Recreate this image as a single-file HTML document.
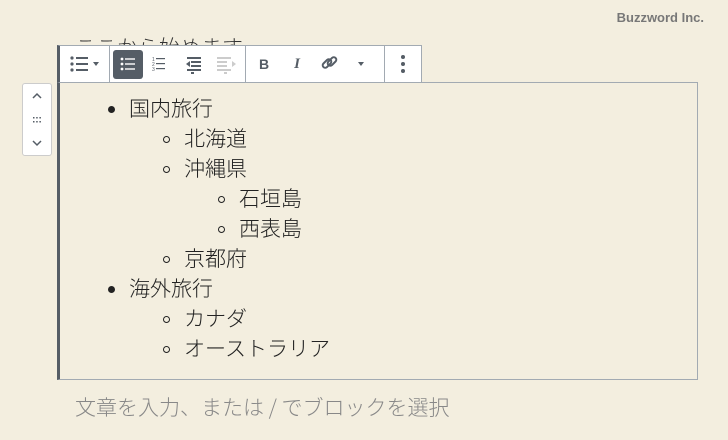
<!DOCTYPE html>
<html><head><meta charset="utf-8"><style>
*{margin:0;padding:0;box-sizing:border-box}
body{width:728px;height:440px;background:#f3eedf;position:relative;overflow:hidden;font-family:"Liberation Sans","Noto Sans CJK JP",sans-serif;color:#222}
.abs{position:absolute}
.logo{right:24px;top:10px;font:bold 13px "Liberation Sans",sans-serif;color:#777}
.behind{left:75px;top:32px;font-size:21px;color:#333;white-space:nowrap;font-family:"Noto Sans CJK JP",sans-serif;font-weight:300}
.tb{left:57px;top:45px;width:365px;height:38px;background:#fff;border:1px solid #a2aab2;border-left:3px solid #555d66;display:flex}
.g{border-right:1px solid #a2aab2;display:flex;align-items:center;height:100%}
.block{left:57px;top:82px;width:641px;height:298px;border:1px solid #a2aab2;border-left:3px solid #555d66}
.mover{left:22px;top:83px;width:30px;height:73px;background:#fff;border:1px solid #ccc;border-radius:3px}
.li{position:absolute;font-size:21px;line-height:30px;white-space:nowrap;font-family:"Noto Sans CJK JP",sans-serif;font-weight:300}
.d1::before,.d2::before{content:"";position:absolute;top:13px;width:7px;height:7px;border-radius:50%}
.d1::before{left:-21px;background:#222}
.d2::before{left:-21px;border:1.3px solid #222;width:7px;height:7px;box-sizing:border-box}
.ph{left:75px;top:392px;font-size:21px;color:#888;white-space:nowrap;font-family:"Noto Sans CJK JP",sans-serif;font-weight:300}
</style></head><body>
<div class="abs logo">Buzzword Inc.</div>
<div class="abs behind">ここから始めます</div>
<div class="abs block"></div>
<div class="abs tb">
 <div class="g" style="width:50px;justify-content:center">
  <svg width="34" height="20"><g fill="#555d66"><circle cx="4" cy="4" r="1.6"/><circle cx="4" cy="10" r="1.6"/><circle cx="4" cy="16" r="1.6"/><rect x="8" y="3" width="12" height="2"/><rect x="8" y="9" width="12" height="2"/><rect x="8" y="15" width="12" height="2"/><path d="M25 8h6l-3 4z"/></g></svg>
 </div>
 <div class="g" style="width:136px;padding-left:3px;gap:0">
  <div style="width:30px;height:29px;background:#555d66;border-radius:3px;display:flex;align-items:center;justify-content:center">
   <svg width="16" height="14"><g fill="#fff"><circle cx="2" cy="2" r="1.4"/><circle cx="2" cy="7" r="1.4"/><circle cx="2" cy="12" r="1.4"/><rect x="5" y="1.3" width="10" height="1.4"/><rect x="5" y="6.3" width="10" height="1.4"/><rect x="5" y="11.3" width="10" height="1.4"/></g></svg>
  </div>
  <svg width="34" height="20"><g fill="#555d66" font-size="5" font-family="Liberation Sans"><text x="9" y="7">1</text><text x="9" y="12">2</text><text x="9" y="17">3</text><rect x="13" y="4" width="9" height="1.2"/><rect x="13" y="9" width="9" height="1.2"/><rect x="13" y="14" width="9" height="1.2"/></g></svg>
  <svg width="34" height="20"><g fill="#555d66"><rect x="10" y="3" width="14" height="2"/><rect x="14" y="7" width="10" height="2"/><rect x="14" y="11" width="10" height="2"/><rect x="10" y="15" width="14" height="2"/><path d="M9 10l4-3v6z"/><rect x="14" y="18" width="3" height="2"/></g></svg>
  <svg width="34" height="20"><g fill="#ccc"><rect x="6" y="3" width="14" height="2"/><rect x="6" y="7" width="10" height="2"/><rect x="6" y="11" width="10" height="2"/><rect x="6" y="15" width="14" height="2"/><path d="M25 10l-4-3v6z"/><rect x="13" y="18" width="3" height="2"/></g></svg>
 </div>
 <div class="g" style="width:139px;">
  <span style="width:36px;text-align:center;font:bold 14px 'Liberation Sans';color:#555d66">B</span>
  <span style="width:30px;text-align:center;font:italic bold 15px 'Liberation Serif';color:#555d66">I</span>
  <svg width="34" height="20"><g fill="none" stroke="#555d66" stroke-width="2"><rect x="10" y="7" width="10" height="5" rx="2.5" transform="rotate(-45 15 9.5)"/><rect x="15" y="5" width="10" height="5" rx="2.5" transform="rotate(-45 20 7.5)"/></g></svg>
  <svg width="30" height="20"><path d="M12 8h6l-3 4z" fill="#555d66"/></svg>
 </div>
 <div class="g" style="width:36px;border-right:none;justify-content:center">
  <svg width="6" height="20"><g fill="#555d66"><circle cx="3" cy="3" r="2"/><circle cx="3" cy="10" r="2"/><circle cx="3" cy="17" r="2"/></g></svg>
 </div>
</div>
<div class="abs mover">
 <svg width="28" height="71"><g fill="none" stroke="#555d66" stroke-width="1.5"><path d="M10 14l4-4 4 4"/><path d="M10 57l4 4 4-4"/></g><g fill="#555d66"><rect x="10" y="33" width="1.5" height="1.5"/><rect x="13.2" y="33" width="1.5" height="1.5"/><rect x="16.4" y="33" width="1.5" height="1.5"/><rect x="10" y="37" width="1.5" height="1.5"/><rect x="13.2" y="37" width="1.5" height="1.5"/><rect x="16.4" y="37" width="1.5" height="1.5"/></g></svg>
</div>
<div class="li d1" style="left:129px;top:93px">国内旅行</div>
<div class="li d2" style="left:184px;top:123px">北海道</div>
<div class="li d2" style="left:184px;top:153px">沖縄県</div>
<div class="li d2" style="left:239px;top:183px">石垣島</div>
<div class="li d2" style="left:239px;top:213px">西表島</div>
<div class="li d2" style="left:184px;top:243px">京都府</div>
<div class="li d1" style="left:129px;top:273px">海外旅行</div>
<div class="li d2" style="left:184px;top:303px">カナダ</div>
<div class="li d2" style="left:184px;top:333px">オーストラリア</div>
<div class="abs ph">文章を入力、または / でブロックを選択</div>
</body></html>
